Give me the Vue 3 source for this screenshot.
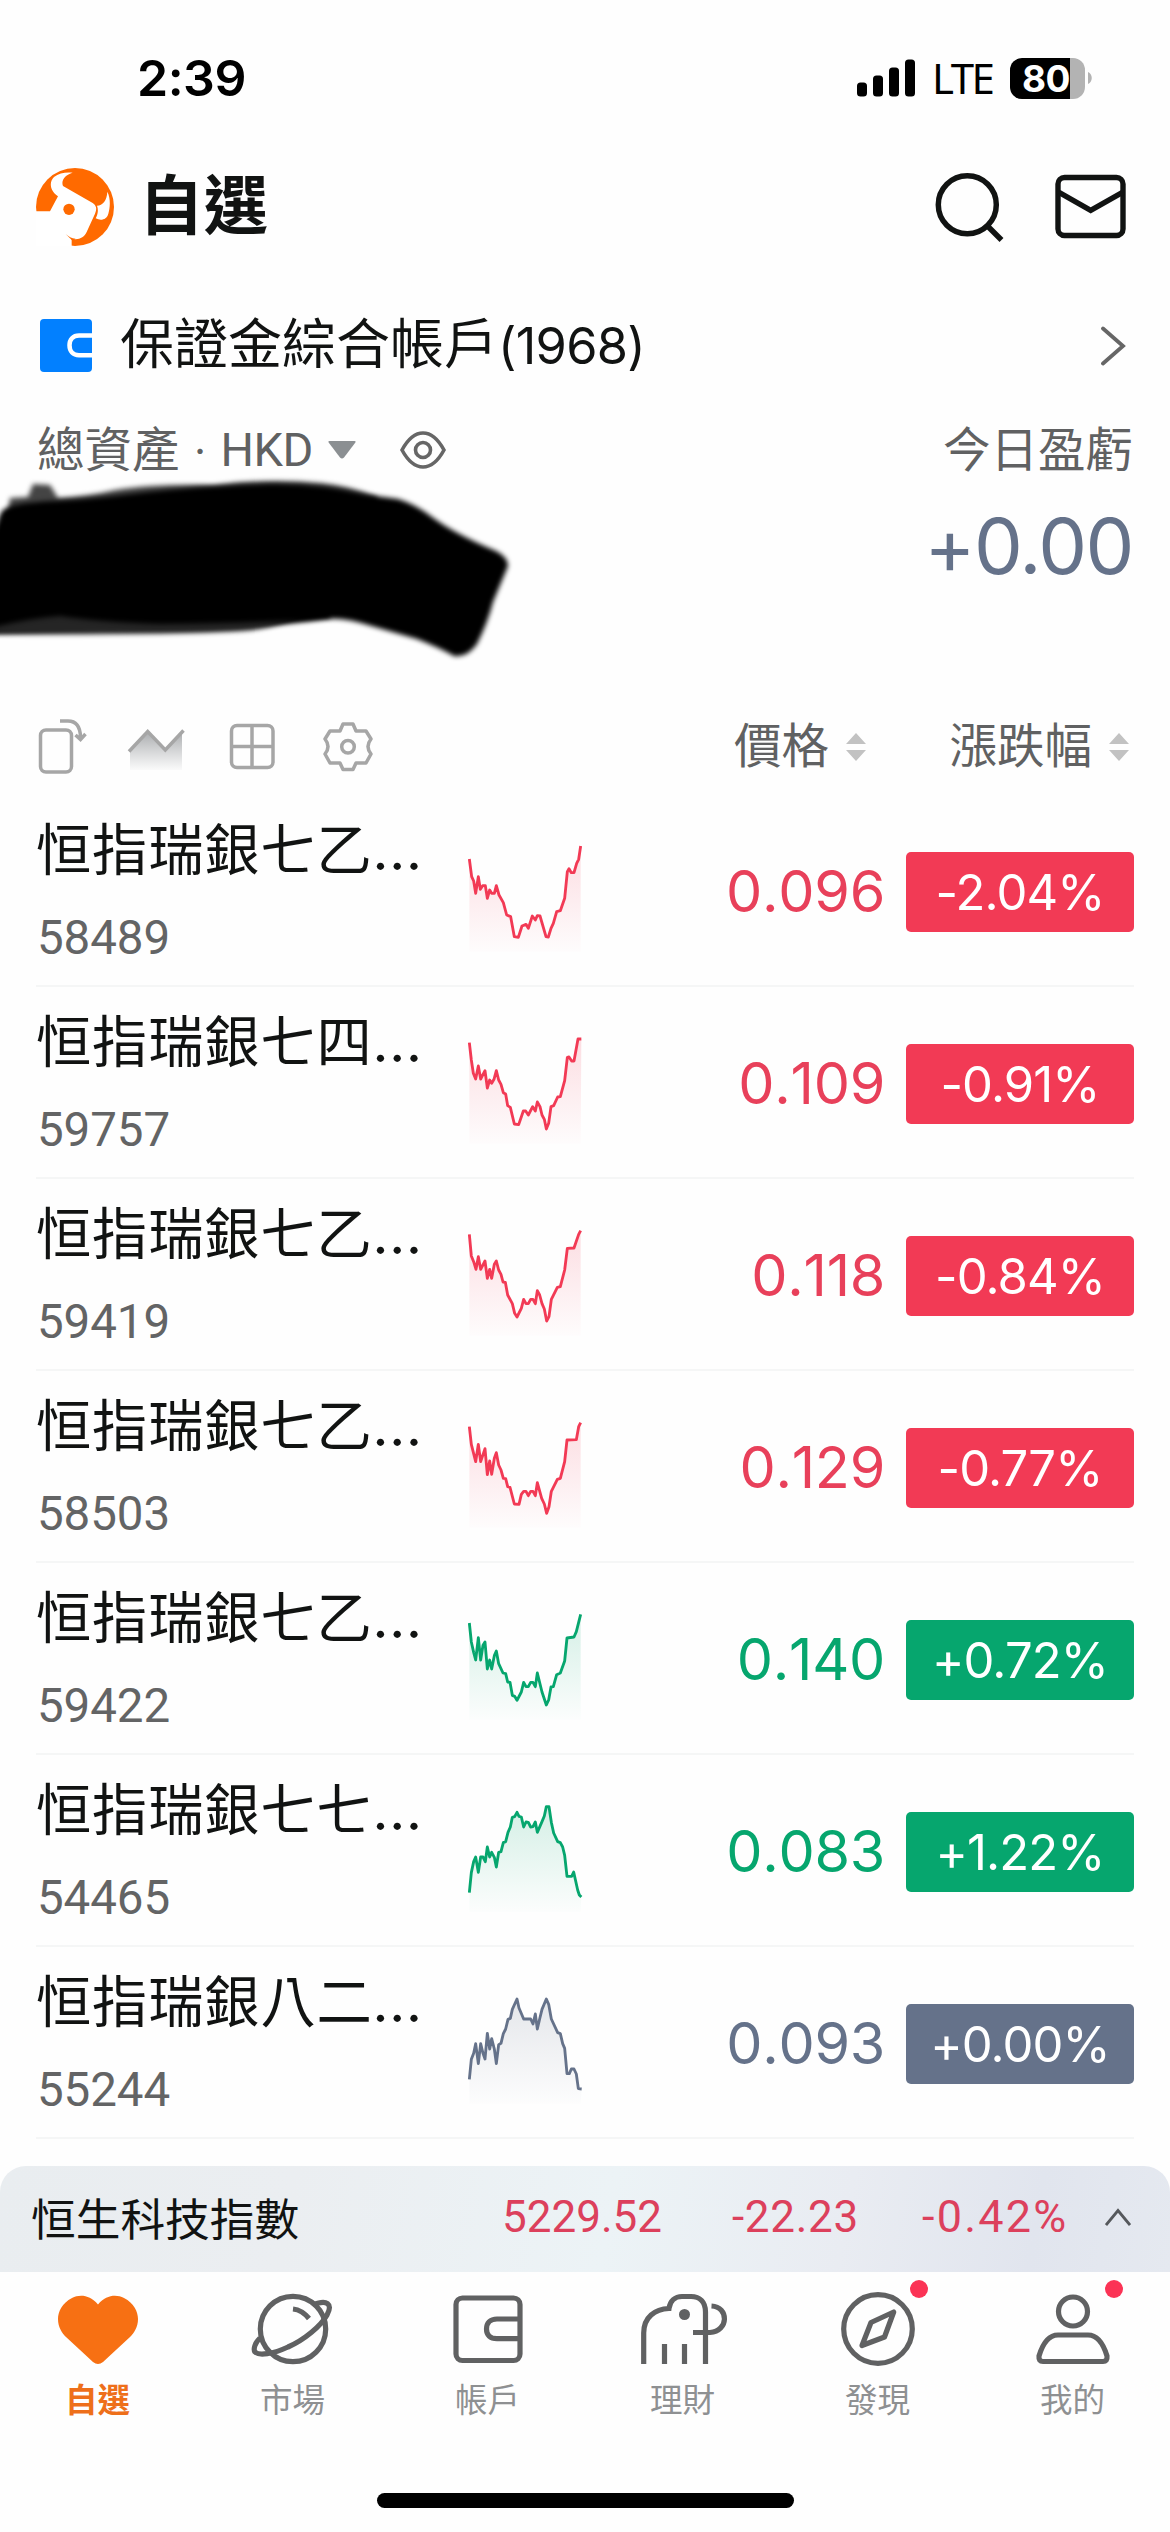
<script setup>
const rows = [
  { name: '恒指瑞銀七乙...', code: '58489', price: '0.096', pct: '-2.04%', tone: 'down', pts: '88,192 95,245 101,258 107,295 115,245 121,283 128,272 136,272 142,310 149,285 155,295 163,295 169,272 177,300 190,323 200,360 212,365 223,425 235,427 246,393 258,388 265,400 277,363 286,375 292,362 300,363 318,425 325,426 333,400 340,385 350,350 361,347 374,310 382,230 387,221 394,233 402,233 410,205 416,193 422,153' },
  { name: '恒指瑞銀七四...', code: '59757', price: '0.109', pct: '-0.91%', tone: 'down', pts: '88,167 94,219 100,259 107,276 115,237 122,276 135,251 142,303 149,279 155,289 162,277 169,251 176,279 183,292 190,317 197,321 203,356 211,361 223,411 236,413 250,372 257,372 265,384 278,359 286,372 292,345 300,359 306,384 313,397 319,426 326,409 333,359 341,356 353,330 361,329 374,281 382,211 387,210 395,222 402,222 414,156 424,156' },
  { name: '恒指瑞銀七乙...', code: '59419', price: '0.118', pct: '-0.84%', tone: 'down', pts: '88,166 94,231 101,248 108,271 115,233 122,271 135,246 142,298 149,271 155,298 163,256 169,246 176,273 183,286 189,309 196,310 203,348 217,374 224,403 231,414 244,388 251,361 258,374 265,374 272,361 279,361 286,374 292,335 299,348 306,374 313,390 320,426 327,413 334,361 352,325 361,323 374,273 382,208 402,207 416,166 422,155' },
  { name: '恒指瑞銀七乙...', code: '58503', price: '0.129', pct: '-0.77%', tone: 'down', pts: '88,167 94,220 107,272 115,220 122,272 135,233 142,311 149,270 155,310 163,262 169,245 176,282 183,297 190,322 197,323 203,347 210,349 223,399 237,400 244,370 251,361 258,361 265,374 272,361 279,361 286,374 292,335 305,382 313,399 320,427 327,407 334,361 352,325 361,322 374,272 381,207 409,206 416,167 422,155' },
  { name: '恒指瑞銀七乙...', code: '59422', price: '0.140', pct: '+0.72%', tone: 'up', pts: '88,180 94,237 101,268 107,291 115,224 122,291 129,247 135,237 142,318 149,291 155,318 163,278 169,264 176,302 189,330 197,332 203,357 210,358 217,397 224,400 231,412 244,387 251,358 258,371 265,371 272,358 279,358 286,371 292,330 306,387 319,426 326,411 333,372 340,371 350,335 361,330 374,294 381,225 402,222 409,206 422,154' },
  { name: '恒指瑞銀七七...', code: '54465', price: '0.083', pct: '+1.22%', tone: 'up', pts: '88,413 94,353 101,320 107,306 115,352 122,306 129,306 136,320 142,276 149,306 155,292 163,307 169,336 176,292 183,290 190,263 197,260 204,232 211,216 217,187 224,185 231,172 237,184 244,186 251,216 258,201 265,202 272,216 279,215 286,201 292,232 306,200 313,183 319,155 327,155 334,202 341,234 353,260 361,263 368,276 374,301 381,364 395,364 401,351 413,405 418,420 424,426' },
  { name: '恒指瑞銀八二...', code: '55244', price: '0.093', pct: '+0.00%', tone: 'flat', pts: '88,397 94,337 101,319 107,290 115,350 122,290 129,319 135,336 142,259 149,306 155,275 163,306 169,350 176,293 183,289 190,260 197,246 204,217 211,214 217,187 231,156 237,183 251,216 272,216 279,231 286,201 292,246 299,216 306,187 319,156 326,172 334,216 353,257 361,260 368,290 374,304 381,380 388,380 394,366 402,366 409,381 415,425 425,426' },
]
const tones = { down: '#f23a55', up: '#06a66e', flat: '#65728a' }
const tabs = [
  { id: 'fav', label: '自選' },
  { id: 'market', label: '市場' },
  { id: 'account', label: '帳戶' },
  { id: 'wealth', label: '理財' },
  { id: 'discover', label: '發現', dot: true },
  { id: 'me', label: '我的', dot: true },
]
</script>

<template>
  <div class="screen">
    <div class="status">
      <span class="time">2:39</span>
      <div class="status-right">
        <svg class="signal" width="58" height="38" viewBox="0 0 58 38">
          <rect x="0" y="23.5" width="10" height="14" rx="3.5" />
          <rect x="16" y="16.5" width="10" height="21" rx="3.5" />
          <rect x="32" y="8.5" width="10" height="29" rx="3.5" />
          <rect x="48" y="0.5" width="10" height="37" rx="3.5" />
        </svg>
        <span class="lte">LTE</span>
        <div class="battery"><span>80</span></div>
        <svg width="4" height="12" viewBox="0 0 4 12"><path d="M0 0C5 2 5 10 0 12Z" fill="#b3b3b3" /></svg>
      </div>
    </div>

    <header class="header">
      <svg class="logo" width="78" height="78" viewBox="18 23 234 234">
        <circle cx="135" cy="140" r="117" fill="#ff6a00" />
        <path fill="#fff" d="M10 153H60L84 108C60 92 56 66 72 50C87 38 107 35 128 37C106 43 92 60 99 77L188 128C200 136 201 146 195 160L170 215C163 232 145 240 125 235V262H10Z" />
        <path fill="#fff" d="M232 94C243 115 240 144 235 160C230 178 213 182 197 174C205 160 205 147 201 136C218 136 231 120 232 94Z" />
        <path fill="#ff6a00" d="M107 221C116 229 124 234 137 235L126 240Z" />
        <circle cx="117" cy="147" r="17" fill="#ff6a00" />
      </svg>
      <h1>自選</h1>
      <svg class="search" width="72" height="72" viewBox="932 170.500 72 72" fill="none" stroke="#111312" stroke-width="5.5">
        <circle cx="967.3" cy="204.3" r="29" />
        <path d="M987 225L1001.5 239.5" />
      </svg>
      <svg width="72" height="72" viewBox="1054 171.200 72 72" fill="none" stroke="#111312" stroke-width="5.4">
        <rect x="1058" y="177.700" width="65" height="58" rx="6.500" />
        <path d="M1059 192.500L1090.700 210.500L1122.500 192.500" />
      </svg>
    </header>

    <div class="account">
      <svg width="52" height="53" viewBox="0 0 52 53">
        <rect width="52" height="53" rx="4" fill="#0280ff" />
        <path d="M52 16.500H39C33 16.500 29.500 20.500 29.500 26.300S33 36.200 39 36.200H52" fill="none" stroke="#fff" stroke-width="4.500" />
      </svg>
      <span class="account-name">保證金綜合帳戶<span class="num">(1968)</span></span>
      <svg class="chev" width="26" height="40" viewBox="0 0 26 40" fill="none" stroke="#666" stroke-width="3.800" stroke-linecap="round">
        <path d="M3 2.500L23 20L3 37.500" />
      </svg>
    </div>

    <section class="assets">
      <div class="assets-head">
        <span class="lbl">總資產</span><span class="mid">·</span><span class="cur">HKD</span>
        <svg class="tri" width="28" height="18" viewBox="0 0 28 18"><path d="M1.500 0H26.500Q28.500 0 27 2L16 16.500Q14 18.500 12 16.500L1 2Q-.5 0 1.500 0Z" fill="#8b8f92" /></svg>
        <svg class="eye" width="46" height="42" viewBox="0 0 46 42" fill="none" stroke="#666" stroke-width="3.600">
          <path d="M2 21C8 10 14 4 23 4S38 10 44 21C38 32 32 38 23 38S8 32 2 21Z" />
          <circle cx="23" cy="21" r="7.500" />
        </svg>
        <span class="lbl today">今日盈虧</span>
      </div>
      <div class="pl">+0.00</div>
      <svg class="scribble" width="530" height="200" viewBox="0 470 530 200">
        <path class="soft" d="M8 512L10 498L28 497L33 484L50 485L58 498Q90 496 115 490Q150 484 214 485Q268 478 321 483Q350 486 377 497V520H0Z" fill="#444" />
        <path class="soft" d="M-10 540L2 511Q10 503 54 501Q80 500 115 496Q180 487 268 484Q320 483 367 495Q384 497 398 499Q415 504 432 517Q455 534 496 551Q508 557 508 566L493 602Q488 622 477 644Q467 658 454 656Q440 648 417 639L375 627Q345 617 326 619Q290 624 250 627Q200 631 100 629L-10 633Z" />
        <path class="soft" d="M-10 600H320Q290 628 240 631Q160 635 -10 634Z" fill="#252525" />
        <path class="soft" d="M-10 580H330V618Q250 624 160 624Q100 622 60 616Q30 618 -10 628Z" />
      </svg>
    </section>

    <div class="columns">
      <svg class="tools" width="340" height="60" viewBox="36 716 340 60" fill="none" stroke="#a6a6a6" stroke-width="3.500">
        <defs>
          <linearGradient id="toolfill" x1="0" y1="0" x2="0" y2="1">
            <stop offset="0" stop-color="#8c8f92" stop-opacity=".75" />
            <stop offset="1" stop-color="#9a9da0" stop-opacity=".04" />
          </linearGradient>
        </defs>
        <rect x="40.500" y="730" width="31" height="42" rx="5.500" />
        <path d="M60 721H68Q80 721 80.500 737M75.500 735L80.500 739.500L85.500 734" />
        <path d="M130 751L147.700 731L165.300 750L182 732V770H130Z" fill="url(#toolfill)" stroke="none" />
        <path d="M129 751.500L147.700 731.500L165.300 750L183.500 730.500" />
        <rect x="231.500" y="725.500" width="41.500" height="42" rx="5.500" />
        <path d="M252 725V768M231 746.500H273" />
        <circle cx="348" cy="746.700" r="6.300" />
        <path stroke-linejoin="round" d="M343 724H353L356 731H366L371 739C367 744 367 749 371 754L366 763H356L353 769.500H343L340 763H330L325 754C329 749 329 744 325 739L330 731H340Z" />
      </svg>
      <span class="lbl col-price">價格</span>
      <svg class="sort" width="20" height="28" viewBox="0 0 20 28" fill="#c2c2c2"><path d="M10 0L20 11H0ZM0 17H20L10 28Z" /></svg>
      <span class="lbl col-chg">漲跌幅</span>
      <svg class="sort" width="20" height="28" viewBox="0 0 20 28" fill="#c2c2c2"><path d="M10 0L20 11H0ZM0 17H20L10 28Z" /></svg>
    </div>

    <svg class="defs" width="0" height="0">
      <defs>
        <linearGradient v-for="(c, k) in tones" :id="'fill-' + k" :key="k" gradientUnits="userSpaceOnUse" x1="0" y1="150" x2="0" y2="470">
          <stop offset="0" :stop-color="c" stop-opacity=".17" />
          <stop offset="1" :stop-color="c" stop-opacity=".01" />
        </linearGradient>
      </defs>
    </svg>
    <main class="list">
      <div v-for="r in rows" :key="r.code" class="row">
        <div class="stock">
          <div class="name">{{ r.name }}</div>
          <div class="code">{{ r.code }}</div>
        </div>
        <svg class="spark" width="120" height="190" viewBox="75 0 360 570">
          <polygon :points="`88,470 ${r.pts} 422,470`" :fill="`url(#fill-${r.tone})`" />
          <polyline :points="r.pts" fill="none" :stroke="tones[r.tone]" stroke-width="8.500" stroke-linejoin="round" />
        </svg>
        <div class="price" :class="r.tone">{{ r.price }}</div>
        <div class="pill" :class="r.tone">{{ r.pct }}</div>
      </div>
    </main>

    <div class="index">
      <span class="index-name">恒生科技指數</span>
      <span class="i1">5229.52</span>
      <span class="i2">-22.23</span>
      <span class="i3">-0.42%</span>
      <svg width="26" height="18" viewBox="0 0 26 18" fill="none" stroke="#55585c" stroke-width="2.800"><path d="M1 17L13 2.500L25 17" /></svg>
    </div>

    <nav class="tabs">
      <div v-for="t in tabs" :key="t.id" class="tab" :class="{ active: t.id === 'fav' }">
        <div class="icon">
          <svg width="90" height="80" viewBox="-45 -40 90 80" fill="none" stroke="#606162" stroke-width="5.200">
            <path v-if="t.id === 'fav'" stroke="none" fill="#f77013" d="M0 -24.500C8 -34 18 -35 26 -31C36 -26 40 -17 40 -10C40 -2 36 4 32 8L5 33Q0 37 -5 33L-32 8C-36 4 -40 -2 -40 -10C-40 -17 -36 -26 -26 -31C-18 -35 -8 -34 0 -24.500Z" />
            <g v-else-if="t.id === 'market'">
              <circle r="32.700" />
              <path d="M0 -20Q9 -19 16 -10.500M20 -24C34 -30 40 -25 34 -14C28 -3 11 11 -5 18C-20 25 -34 27 -38 23C-40 20 -38 14 -33 9" />
            </g>
            <g v-else-if="t.id === 'account'">
              <rect x="-32" y="-31" width="64" height="62.500" rx="6.500" />
              <path d="M32 -10H9C2 -10 -1.500 -6 -1.500 0S2 9.600 9 9.600H32" />
            </g>
            <g v-else-if="t.id === 'wealth'">
              <path d="M-39.300 35V4C-39.300 -12 -28 -20 -14 -20.500C-13 -28 -8 -32.500 -1 -32.500H8C17 -32.500 22.500 -27 22.500 -17V35M-18.500 15V35M1.500 15V35M10 3.500H27C46 2 46 -22 28.500 -23" />
              <circle cx="1.500" cy="-14.500" r="5.500" fill="#606162" stroke="none" />
            </g>
            <g v-else-if="t.id === 'discover'" stroke-linejoin="round">
              <circle r="34.300" />
              <path d="M15.700 -17L6.500 8L-16 16.500L-7 -6.500Z" />
            </g>
            <g v-else>
              <circle cy="-17.500" r="14.500" />
              <path d="M-15 6H15C25 6 31 17 34 27Q34.500 32.500 30 32.500H-30Q-34.500 32.500 -34 27C-31 17 -25 6 -15 6Z" />
            </g>
          </svg>
          <i v-if="t.dot" class="dot"></i>
        </div>
        <span>{{ t.label }}</span>
      </div>
    </nav>
    <div class="home"></div>
  </div>
</template>

<style>
body { margin: 0; background: #fff; }
</style>

<style scoped>
.screen {
  width: 1170px;
  height: 2532px;
  display: flex;
  flex-direction: column;
  overflow: hidden;
  background: #fefefe;
  color: #111312;
  font-family: Inter, "Noto Sans CJK TC", sans-serif;
  white-space: nowrap;
}
svg { display: block; flex: none; }
.status { height: 156px; display: flex; padding: 0 78px 0 137px; justify-content: space-between; align-items: center; box-sizing: border-box; color: #000; }
.time { font-size: 50px; font-weight: 600; letter-spacing: -0.5px; line-height: 60px; }
.status-right { display: flex; align-items: center; }
.lte { font: 42px/50px "Noto Sans", sans-serif; letter-spacing: -2.5px; margin-left: 17px; width: 78px; }
.battery { width: 75px; height: 41px; border-radius: 12px; background: linear-gradient(90deg, #000 60px, #b3b3b3 60px); margin-right: 3px; color: #fff; font-size: 37px; font-weight: 700; line-height: 41px; }
.battery span { display: block; padding-left: 12px; letter-spacing: -0.5px; }
.header { height: 102px; padding: 0 44px 0 36px; display: flex; align-items: center; }
h1 { margin: 0 auto 3px 25px; font-size: 64.500px; line-height: 80px; font-weight: 700; }
.search { margin-right: 50px; }
.account { height: 175px; display: flex; align-items: center; padding: 0 44px 0 40px; }
.account-name { font-size: 54px; line-height: 70px; margin-left: 28px; }
.num { font-size: 50.500px; letter-spacing: -0.700px; }
.chev { margin-left: auto; }
.assets { height: 271px; padding: 0 37px; position: relative; }
.assets-head { height: 34px; display: flex; align-items: center; color: #606162; }
.lbl { font-size: 47.500px; line-height: 60px; color: #606162; }
.mid { width: 41px; text-align: center; font-size: 40px; }
.cur { font: 47px/56px Roboto, sans-serif; width: 107px; letter-spacing: -0.5px; }
.eye { margin-left: 44px; }
.today { margin-left: auto; }
.pl { margin-top: 34px; text-align: right; font-size: 77.500px; line-height: 90px; color: #65728a; letter-spacing: -1.500px; }
.scribble { position: absolute; left: 0; top: 37px; }
.soft { filter: blur(2.500px); }
.columns { height: 91px; box-sizing: border-box; display: flex; align-items: flex-start; padding: 12px 41px 0 36px; }
.col-price { margin-left: 358px; width: 112px; }
.col-chg { margin-left: 84px; width: 160px; }
.sort { margin-top: 17px; }
.defs { position: absolute; }
.list { flex: none; margin: 0 36px; }
.row { height: 192px; box-sizing: border-box; border-bottom: 2px solid #f5f6f6; display: flex; }
.stock { width: 429px; padding-top: 19px; }
.name { font-size: 55.300px; line-height: 72px; letter-spacing: 0.800px; }
.code { font: 47.500px/56px Roboto, sans-serif; color: #636465; margin-top: 24px; padding-left: 1px; letter-spacing: -0.1px; }
.price { width: 300px; text-align: right; font-size: 57.500px; line-height: 80px; margin-top: 56px; letter-spacing: -0.3px; font-kerning: none; }
.price.down { color: #e8405a; }
.price.up { color: #06a66e; }
.price.flat { color: #65728a; }
.pill { width: 228px; height: 80px; border-radius: 5px; margin: 57px 0 0 21px; text-align: center; color: #fff; font-size: 49px; line-height: 81px; letter-spacing: -0.900px; }
.pill.down { background: #f23a55; }
.pill.up { background: #06a66e; }
.pill.flat { background: #65728a; }
.index { margin-top: 27px; height: 106px; flex: none; border-radius: 26px 26px 0 0; display: flex; align-items: center; padding: 0 39px 4px 31px; box-sizing: border-box; background: linear-gradient(100deg, #e9edf0 0%, #ebeef1 25%, #ecf3f6 52%, #e9ecf2 72%, #e1e5ee 88%, #e5e9f0 100%); font: 44px/60px Roboto, sans-serif; color: #dc405c; }
.index-name { font: 44.700px/60px "Noto Sans CJK TC", sans-serif; color: #111312; width: 471px; }
.i1 { width: 230px; }
.i2 { width: 190px; letter-spacing: 0.700px; }
.i3 { font-size: 45px; letter-spacing: 2.200px; margin-right: auto; }
.tabs { display: grid; grid-template-columns: repeat(6, 195px); padding-top: 17px; height: 204px; flex: none; }
.tab { display: flex; flex-direction: column; align-items: center; font-size: 32.500px; line-height: 44px; color: #8e9092; }
.tab span { margin-top: 10px; }
.tab.active { color: #ee6f1a; font-weight: 700; }
.icon { position: relative; }
.dot { position: absolute; width: 18px; height: 18px; border-radius: 50%; background: #fb3355; right: -5px; top: -9px; }
.home { width: 417px; height: 15px; border-radius: 8px; background: #000; margin: 0 auto; flex: none; }
</style>
